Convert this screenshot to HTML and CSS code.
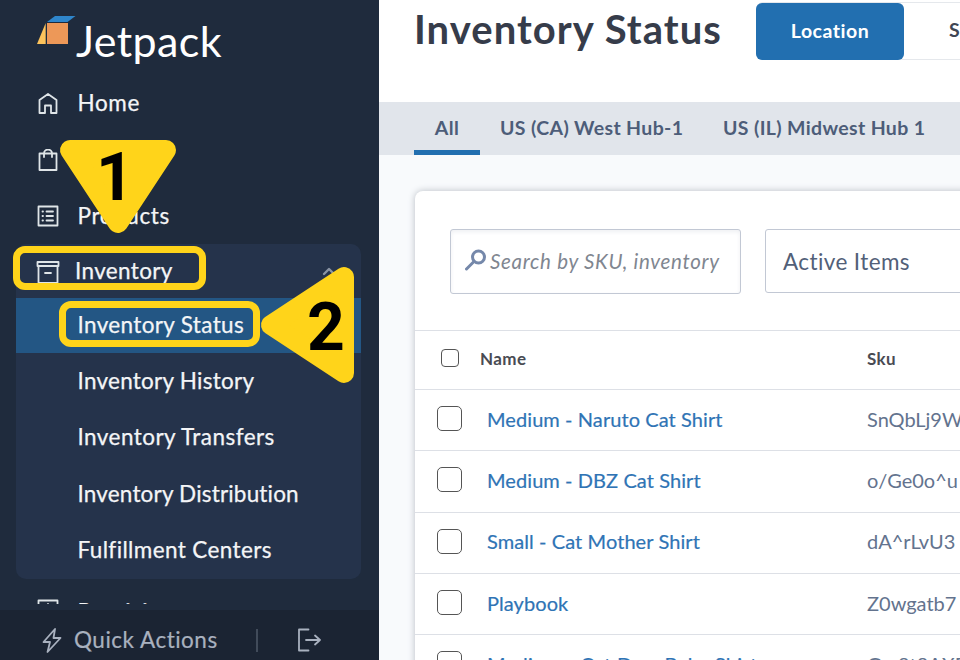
FILE: index.html
```html
<!DOCTYPE html>
<html lang="en">
<head>
<meta charset="utf-8">
<title>Inventory Status</title>
<link rel="stylesheet" href="styles.css">
</head>
<body>
<div class="app">
  <aside class="sidebar">
    <div class="brand">
      <svg class="brand-mark" width="40" height="30" viewBox="0 0 40 30"><path d="M18 1h20.500l-8 6H10z"/><path d="M10 8h21v21H10z"/><path d="M8.700 8v21H0z"/></svg>
      <span class="brand-name">Jetpack</span>
    </div>
    <nav class="menu">
      <a class="item"><svg class="icon" viewBox="0 0 22 22"><path d="M2.500 8 11 2l8.500 6V21h-5.500v-7.500H8V21H2.500z"/></svg><span class="t-home">Home</span></a>
      <a class="item"><svg class="icon" viewBox="0 0 22 22"><path d="M2.500 4.500h17v16.500h-17zM7 8V4.500a4 4 0 0 1 8 0V8"/></svg><span>Orders</span></a>
      <a class="item"><svg class="icon" viewBox="0 0 22 22"><path d="M1.500 1.500h19v19h-19zM5.500 6.500h.5m3.500 0H16M5.500 11h.5m3.500 0H16M5.500 15.500h.5m3.500 0H16"/></svg><span class="t-home">Products</span></a>
      <div class="group">
        <a class="item group-head"><svg class="icon wide" viewBox="0 0 24 24"><path d="M1.500 2h21v4h-21zM2.500 6h19v17h-19zM9 13h6"/></svg><span class="t-inventory">Inventory</span><svg class="chevron" viewBox="0 0 14 10"><path d="m2 8 5-5 5 5"/></svg></a>
        <a class="sub active"><span class="t-status">Inventory Status</span></a>
        <a class="sub"><span class="t-history">Inventory History</span></a>
        <a class="sub"><span class="t-transfers">Inventory Transfers</span></a>
        <a class="sub"><span class="t-dist">Inventory Distribution</span></a>
        <a class="sub"><span class="t-centers">Fulfillment Centers</span></a>
      </div>
      <a class="item clipped"><svg class="icon" viewBox="0 0 22 22"><path d="M1.500 1.500h19v19h-19zM11 5v9M7 10l4 4 4-4"/></svg><span>Receiving</span></a>
    </nav>
    <footer class="quick">
      <svg class="bolt" viewBox="0 0 22 28"><path d="M14 3 2.500 16H9L6.500 26 19.500 12h-7z"/></svg>
      <span class="t-quick">Quick Actions</span>
      <i class="bar"></i>
      <svg class="logout" viewBox="0 0 26 26"><path d="M12.500 2.500h-9.500v21h9.500M10 13h14M19 8.500l5 4.500-5 4.500"/></svg>
    </footer>
  </aside>
  <main class="main">
    <header class="top">
      <h1>Inventory Status</h1>
      <div class="toggle"><button class="on">Location</button><button class="off">SKU</button></div>
    </header>
    <div class="tabs"><a class="tab current"><span>All</span></a><a class="tab west"><span>US (CA) West Hub-1</span></a><a class="tab mid"><span>US (IL) Midwest Hub 1</span></a></div>
    <section class="card">
      <div class="filters">
        <div class="search"><svg viewBox="0 0 22 22"><circle cx="13.500" cy="8" r="6"/><path d="m9 12.500-7.500 7.500"/></svg><span>Search by SKU, inventory</span></div>
        <div class="select"><span>Active Items</span></div>
      </div>
      <div class="row head"><i class="check small"></i><b class="name">Name</b><b class="sku">Sku</b></div>
      <div class="row"><i class="check"></i><a class="name">Medium - Naruto Cat Shirt</a><span class="sku">SnQbLj9W</span></div>
      <div class="row"><i class="check"></i><a class="name">Medium - DBZ Cat Shirt</a><span class="sku">o/Ge0o^u</span></div>
      <div class="row"><i class="check"></i><a class="name">Small - Cat Mother Shirt</a><span class="sku">dA^rLvU3</span></div>
      <div class="row"><i class="check"></i><a class="name">Playbook</a><span class="sku">Z0wgatb7</span></div>
      <div class="row"><i class="check"></i><a class="name last">Medium - Cat Dew Baby Shirt</a><span class="sku">Gm8t8AXP</span></div>
    </section>
  </main>
  <div class="outline first"></div>
  <div class="outline second"></div>
  <svg class="callouts" viewBox="0 0 380 400">
    <path d="M70 150h96l-48 73z"/>
    <path d="M344 277v96l-73-48z"/>
    <text x="96" y="200">1</text>
    <text x="307" y="350">2</text>
  </svg>
</div>
</body>
</html>
```
FILE: styles.css
```css
* { box-sizing: border-box; }
body { margin: 0; font-family: Lato, "Liberation Sans", sans-serif; font-variant-ligatures: none; }
.app { position: relative; display: flex; width: 960px; height: 660px; overflow: hidden; }
.sidebar { width: 379px; flex: none; display: flex; flex-direction: column; background: #1f2b3d; color: #f4f5f7; }
svg path, svg circle { fill: none; stroke: currentColor; stroke-width: 1.8; stroke-linejoin: round; stroke-linecap: round; }
.icon { color: #dfe5e8; }
.brand { height: 75px; flex: none; padding: 15px 0 0 37px; display: flex; align-items: flex-start; }
.brand-mark { flex: none; margin-right: -1px; }
.brand-mark path { stroke: none; }
.brand-mark path:nth-child(1) { fill: #2f86cb; }
.brand-mark path:nth-child(2) { fill: #ed9858; }
.brand-mark path:nth-child(3) { fill: #fcc35c; }
.brand-name { font-size: 43px; line-height: 52px; letter-spacing: .4px; color: #fff; }
.menu { flex: 1; min-height: 0; margin-bottom: 6px; overflow: hidden; font-size: 22.5px; white-space: nowrap; -webkit-text-stroke: .25px currentColor; }
.item { display: flex; align-items: center; height: 56.4px; padding-left: 37px; }
.item span, .sub span { padding-bottom: 1px; }
.sub.active span { padding-bottom: 2px; }
.item .icon { width: 22px; height: 22px; margin-right: 18.5px; }
.item .icon.wide { width: 24px; height: 24px; margin: 2px 15px 0 0; }
.group { width: 345px; height: 335px; margin-left: 16px; background: #25334b; border-radius: 10px; }
.group .group-head { height: 54px; padding-left: 20px; }
.chevron { width: 14px; height: 10px; margin-left: auto; margin-right: 25px; color: #8a94a3; }
.chevron path { stroke-width: 2.4; }
.sub { display: flex; align-items: center; height: 56.2px; padding-left: 61.5px; }
.sub.active { background: #235684; height: 55px; }
.t-home { letter-spacing: .6px; }
.t-inventory { letter-spacing: .35px; }
.t-status { letter-spacing: .35px; }
.t-history { letter-spacing: .25px; }
.t-transfers { letter-spacing: .45px; }
.t-dist { letter-spacing: .18px; }
.t-centers { letter-spacing: .38px; }
.clipped { height: 48px; align-items: flex-start; padding-top: 20px; }
.clipped span { margin-top: -1px; }
.quick { height: 50px; flex: none; display: flex; align-items: center; padding: 10px 0 0 41px; background: #1b2433; color: #a9b1bf; font-size: 22.5px; letter-spacing: .5px; white-space: nowrap; -webkit-text-stroke: .2px currentColor; }
.t-quick { width: 182px; padding-bottom: 2px; }
.bolt { width: 22px; height: 28px; flex: none; margin-right: 11px; }
.bar { width: 2px; height: 23px; margin-right: 38px; background: #414b5a; }
.logout { width: 26px; height: 26px; }
.main { width: 581px; flex: none; overflow: hidden; background: #f8fafc; }
.top { display: flex; height: 102px; padding: 2px 0 0 35px; background: #fff; }
h1 { width: 342px; flex: none; margin: 0; font-size: 40px; line-height: 54px; letter-spacing: 1.05px; color: #363c4a; white-space: nowrap; }
.toggle { display: flex; width: 340px; height: 58px; flex: none; border: 1px solid #e5e8ec; border-radius: 7px; }
button { border: 0; padding: 0 0 3px; font: 700 19.5px Lato, sans-serif; letter-spacing: .5px; background: none; color: #3f4654; }
.on { width: 148px; height: 57px; margin: 0 0 0 -1px; border-radius: 6px; background: #226fb0; color: #fff; }
.off { padding-left: 45px; }
.tabs { display: flex; height: 53px; padding-left: 35px; background: #e1e5eb; color: #4d5d79; font-size: 19.5px; letter-spacing: .35px; font-weight: 700; white-space: nowrap; }
.tab { height: 53px; line-height: 51px; }
.current { width: 66px; text-align: center; border-bottom: 5px solid #226fb0; }
.west { width: 223px; padding-left: 20px; }
.mid { padding-left: 20px; }
.card { width: 600px; height: 600px; margin: 36px 0 0 36px; border-radius: 8px; background: #fff; box-shadow: 0 0 7px #b9bdc5; }
.filters { display: flex; height: 139px; gap: 24px; padding: 38px 0 0 35px; }
.search, .select { display: flex; align-items: center; width: 291px; height: 65px; flex: none; border: 1px solid #c2c8d4; border-radius: 3px; color: #808690; font-size: 20.5px; letter-spacing: .7px; white-space: nowrap; }
.search span { padding-bottom: 2px; }
.search { padding-left: 14px; font-style: italic; box-shadow: inset 0 2px 4px #eff0f3; }
.search svg { width: 22px; height: 22px; flex: none; margin: -4px 3px 0 0; color: #7588aa; }
.search svg path, .search svg circle { stroke-width: 3; }
.select { padding-left: 17px; height: 64px; font-size: 22.5px; letter-spacing: .4px; color: #526078; }
.row { display: flex; align-items: center; height: 61.3px; padding: 0 0 3px 22px; border-top: 1px solid #dde0e6; font-size: 20px; color: #63738e; white-space: nowrap; }
.check { width: 25px; height: 25px; flex: none; margin: 0 25px 0 0; border: 1px solid #555; border-radius: 5px; background: #fff; }
.check.small { width: 18px; height: 18px; margin: -1px 21px 0 4px; border-radius: 4px; }
.name { width: 380px; color: #2f74b5; letter-spacing: .08px; }
.row a.name { -webkit-text-stroke: .2px currentColor; }
.last { letter-spacing: .35px; }
.head { height: 59px; font-size: 17px; }
.head .name, .head .sku { color: #494b53; letter-spacing: .4px; }
.head .name { width: 387px; }
.outline { position: absolute; border: 7px solid #ffd41a; border-radius: 12px; }
.first { left: 13px; top: 246px; width: 193px; height: 44px; }
.second { left: 59px; top: 301px; width: 201px; height: 46px; }
.callouts { position: absolute; left: 0; top: 0; width: 380px; height: 400px; pointer-events: none; }
.callouts path { fill: #ffd41a; stroke: #ffd41a; stroke-width: 20; }
.callouts text { font: 700 66px Roboto, sans-serif; fill: #000; }
```
